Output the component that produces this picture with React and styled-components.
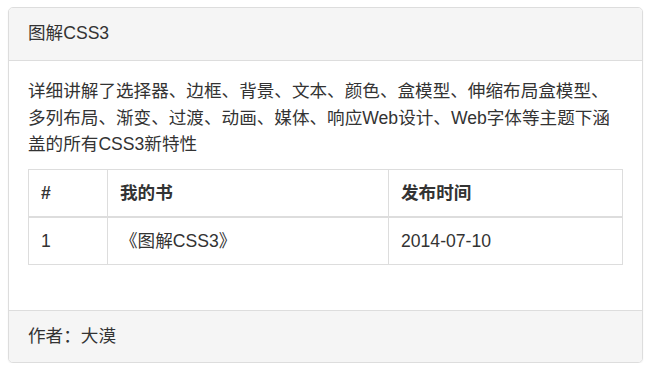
import React from "react";
import styled, { createGlobalStyle } from "styled-components";

const Global = createGlobalStyle`
  html, body { margin: 0; padding: 0; background: #fff; }
  body {
    font-family: "Liberation Sans", "Noto Sans CJK SC", sans-serif;
    font-size: 17.6px;
    color: #333;
  }
  * { box-sizing: border-box; }
`;

const Page = styled.div`
  padding: 7px 7px 0 8px;
`;

const Panel = styled.section`
  border: 1px solid #ddd;
  border-radius: 5px;
  background: #fff;
  box-shadow: 0 1px 2px rgba(0, 0, 0, 0.06);
  overflow: hidden;
`;

const Header = styled.header`
  background: #f5f5f5;
  border-bottom: 1px solid #ddd;
  padding: 13px 19px 14px;
  line-height: 25px;
`;

const Title = styled.h3`
  margin: 0;
  font-size: 17.6px;
  font-weight: normal;
  line-height: 25px;
`;

const Body = styled.div`
  padding: 17px 19px 20px;
`;

const Text = styled.p`
  margin: 0 0 11px;
  line-height: 26.5px;
`;

const Table = styled.table`
  width: 100%;
  border-collapse: collapse;
  border: 1px solid #ddd;
  margin-bottom: 25px;
`;

const Cell = styled.td`
  border: 1px solid #ddd;
  border-bottom-width: ${(p) => (p.$head ? "2px" : "1px")};
  padding: 11px 12px 10px;
  line-height: 25px;
  text-align: left;
  font-weight: ${(p) => (p.$head ? "bold" : "normal")};
  width: ${(p) => p.$w || "auto"};
  vertical-align: middle;
`;

const Footer = styled.footer`
  background: #f5f5f5;
  border-top: 1px solid #ddd;
  padding: 13px 19px 13px;
  line-height: 25px;
`;

export default function App() {
  return (
    <>
      <Global />
      <Page>
        <Panel>
          <Header>
            <Title>图解CSS3</Title>
          </Header>
          <Body>
            <Text>
              详细讲解了选择器、边框、背景、文本、颜色、盒模型、伸缩布局盒模型、多列布局、渐变、过渡、动画、媒体、响应Web设计、Web字体等主题下涵盖的所有CSS3新特性
            </Text>
            <Table>
              <thead>
                <tr>
                  <Cell as="th" $head $w="79px">#</Cell>
                  <Cell as="th" $head $w="281px">我的书</Cell>
                  <Cell as="th" $head>发布时间</Cell>
                </tr>
              </thead>
              <tbody>
                <tr>
                  <Cell>1</Cell>
                  <Cell>《图解CSS3》</Cell>
                  <Cell>2014-07-10</Cell>
                </tr>
              </tbody>
            </Table>
          </Body>
          <Footer>作者：大漠</Footer>
        </Panel>
      </Page>
    </>
  );
}
